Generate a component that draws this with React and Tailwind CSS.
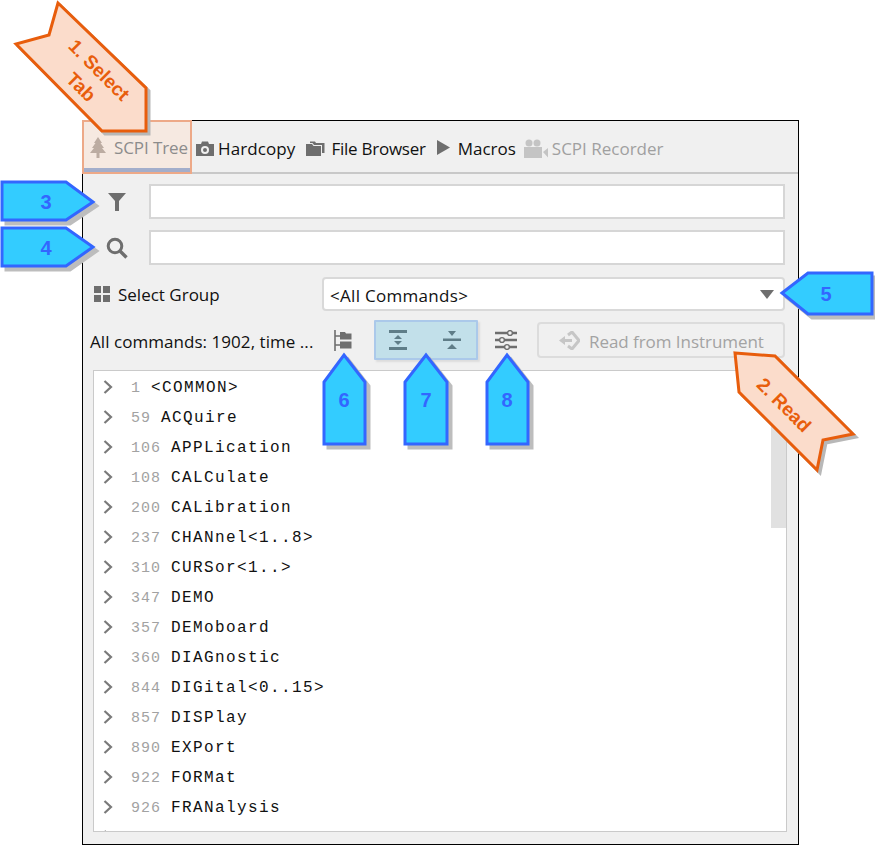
const rows = [
  ["1", "<COMMON>"], ["59", "ACQuire"], ["106", "APPLication"], ["108", "CALCulate"], ["200", "CALibration"],
  ["237", "CHANnel<1..8>"], ["310", "CURSor<1..>"], ["347", "DEMO"], ["357", "DEMoboard"], ["360", "DIAGnostic"],
  ["844", "DIGital<0..15>"], ["857", "DISPlay"], ["890", "EXPort"], ["922", "FORMat"], ["926", "FRANalysis"], ["", ""],
];

const Chevron = () => (
  <svg width="10" height="14" viewBox="0 0 10 14" className="-mt-[2px] shrink-0"><path d="M1.5 1 L8 7 L1.5 13" fill="none" stroke="#7a7a7a" strokeWidth="2.2" /></svg>
);

function Tabs() {
  return (
    <div className="flex h-[53px] items-stretch border-b-2 border-[#c8c8c8] text-[17px] text-[#111]">
      <div className="-mb-[2px] -ml-px -mt-px flex w-[110px] items-center border-2 border-[#eda988] bg-[#f6e9e1] pl-[6px] pt-[2px] text-[#8c8c8c] shadow-[inset_0_-4px_0_#a3aecb]">
        <svg width="16" height="22" viewBox="0 0 16 22"><path d="M8 0 L12 6 H10.5 L14 11 H12 L16 16 H9.5 V21 H6.5 V16 H0 L4 11 H2 L5.5 6 H4 Z" fill="#bcaca2" /></svg>
        <span className="ml-[8px] whitespace-nowrap tracking-[-0.1px]">SCPI Tree</span>
      </div>
      <div className="flex items-center pl-[4px] pt-[4px]">
        <svg width="18" height="16" viewBox="0 0 18 16"><path fillRule="evenodd" d="M0 3 H5 L6 0.5 H12 L13 3 H18 V15 H0 Z M9 5 A4 4 0 1 0 9 13 A4 4 0 1 0 9 5 Z M9 7 A2 2 0 1 1 9 11 A2 2 0 1 1 9 7 Z" fill="#6e6e6e" /></svg>
        <span className="ml-[4px] tracking-[0.1px]">Hardcopy</span>
      </div>
      <div className="flex items-center pl-[11px] pt-[4px]">
        <svg width="19" height="16" viewBox="0 0 19 16"><path d="M0 3 H6 L7.5 5 H15 V15 H0 Z" fill="#6e6e6e" /><path d="M4 0.5 H9 L10 2 H18.5 V12 H16 V4 H8 L6.5 2 H4 Z" fill="#6e6e6e" /></svg>
        <span className="ml-[6px] tracking-[-0.25px]">File Browser</span>
      </div>
      <div className="flex items-center pl-[11px] pt-[4px]">
        <svg width="13" height="15" viewBox="0 0 13 15" className="-mt-[2px]"><path d="M0 0 L13 7.5 L0 15 Z" fill="#6e6e6e" /></svg>
        <span className="ml-[8px]">Macros</span>
      </div>
      <div className="flex items-center pl-[8px] pt-[4px] text-[#a0a0a0]">
        <svg width="24" height="20" viewBox="0 0 24 20"><circle cx="5" cy="4" r="3.5" fill="#c4c4c4" /><circle cx="13" cy="4" r="3.5" fill="#c4c4c4" /><path d="M0 8 H18 V19 H0 Z M19 13 L24 9 V18.5 Z" fill="#c4c4c4" /></svg>
        <span className="ml-[4px]">SCPI Recorder</span>
      </div>
    </div>
  );
}

function Top() {
  return (
    <div className="pr-[13px]">
      <div className="mt-[10px] flex h-[35px] items-center">
        <div className="flex w-[66px] justify-start pl-[25px]">
          <svg width="18" height="18" viewBox="0 0 18 18"><path d="M0 0 H18 L11 8 V18 H7 V8 Z" fill="#6e6e6e" /></svg>
        </div>
        <div className="h-full flex-1 border-2 border-[#d6d6d6] bg-white" />
      </div>
      <div className="mt-[11px] flex h-[35px] items-center">
        <div className="flex w-[66px] pl-[23px]">
          <svg width="22" height="22" viewBox="0 0 22 22"><circle cx="9" cy="9" r="6.8" fill="none" stroke="#6e6e6e" strokeWidth="3" /><path d="M13.5 13.5 L20.5 20.5" stroke="#6e6e6e" strokeWidth="3.4" /></svg>
        </div>
        <div className="h-full flex-1 border-2 border-[#d6d6d6] bg-white" />
      </div>
      <div className="mt-[12px] flex h-[34px] items-center">
        <div className="flex w-[239px] items-center pl-[11px] text-[17px] text-[#111]">
          <svg width="16" height="16" viewBox="0 0 16 16"><path d="M0 0 H7 V7 H0 Z M9 0 H16 V7 H9 Z M0 9 H7 V16 H0 Z M9 9 H16 V16 H9 Z" fill="#6e6e6e" /></svg>
          <span className="ml-[8px] pt-[2px]">Select Group</span>
        </div>
        <div className="flex h-full flex-1 items-center justify-between rounded-[4px] border-2 border-[#d9d9d9] bg-white pl-[6px] pr-[9px] text-[17px] text-[#111]">
          <span className="pt-[4px] tracking-[0.3px]">{"<All Commands>"}</span>
          <svg width="14" height="9" viewBox="0 0 14 9"><path d="M0 0 H14 L7 9 Z" fill="#6e6e6e" /></svg>
        </div>
      </div>
      <div className="mt-[11px] flex h-[36px] items-center">
        <span className="ml-[7px] w-[244px] whitespace-nowrap pt-[4px] text-[17px] tracking-[0.05px] text-[#111]">All commands: 1902, time ...</span>
        <svg width="18" height="21" viewBox="0 0 18 21" className="shrink-0"><path d="M1 0 V21 M1 6 H6 M1 15 H6" stroke="#6e6e6e" strokeWidth="1.6" fill="none" /><path d="M6 2 H11 L12 3.5 H17.5 V9.5 H6 Z M6 11.5 H17.5 V18.5 H6 Z" fill="#6e6e6e" /></svg>
        <div className="ml-[22px] flex h-[40px] w-[104px] shrink-0 items-center rounded-[1px] border-2 border-[#abc9ea] bg-[#c2e0ea] shadow-[2px_2px_2px_#dcdcdc]">
          <svg width="18" height="20" viewBox="0 0 18 20" className="ml-[13px]"><path d="M0 0 H18 V3 H0 Z M0 17 H18 V20 H0 Z M9 5 L13 9 H5 Z M9 15 L13 11 H5 Z" fill="#5f7d88" /></svg>
          <svg width="18" height="20" viewBox="0 0 18 20" className="ml-[36px]"><path d="M0 8.5 H18 V11 H0 Z M5 1 H13 L9 6 Z M9 14 L14 19 H4 Z" fill="#5f7d88" /></svg>
        </div>
        <svg width="22" height="20" viewBox="0 0 22 20" className="ml-[17px] shrink-0">
          <path d="M0 3 H22 M0 10 H22 M0 17 H22" stroke="#6e6e6e" strokeWidth="2.4" />
          <circle cx="15" cy="3" r="2.4" fill="#f0f0f0" stroke="#6e6e6e" strokeWidth="1.4" /><circle cx="7" cy="10" r="2.4" fill="#f0f0f0" stroke="#6e6e6e" strokeWidth="1.4" /><circle cx="12" cy="17" r="2.4" fill="#f0f0f0" stroke="#6e6e6e" strokeWidth="1.4" />
        </svg>
        <div className="ml-[20px] flex h-full flex-1 items-center rounded-[4px] border-2 border-[#dcdcdc] pl-[20px] text-[17px] text-[#a3a3a3]">
          <svg width="21" height="19" viewBox="0 0 21 19"><path d="M9 4 L13 1 L20 9.5 L13 18 L9 15" fill="none" stroke="#c6c6c6" strokeWidth="3" /><path d="M0 9.5 L6 5 V8 H13 V11 H6 V14 Z" fill="#c6c6c6" /></svg>
          <span className="ml-[9px] whitespace-nowrap pt-[4px] tracking-[-0.05px]">Read from Instrument</span>
        </div>
      </div>
    </div>
  );
}

function List() {
  return (
    <div className="mb-[12px] ml-[10px] mr-[11px] mt-[12px] flex min-h-0 flex-1 overflow-hidden border border-[#cacaca] bg-white pt-[2px]">
      <div className="min-w-0 flex-1">
        {rows.map(([n, label], i) => (
          <div key={i} className="flex h-[30px] items-center pl-[9px] [font-family:'Liberation_Mono',monospace]">
            <Chevron />
            <span className="ml-[18px] text-[15px] leading-none tracking-[1px] text-[#a2a2a2]">{n}</span>
            <span className="ml-[10px] text-[16px] leading-none tracking-[1.4px] text-[#111]">{label}</span>
          </div>
        ))}
      </div>
      <div className="w-[15px] shrink-0"><div className="h-[155px] bg-[#e1e1e1]" /></div>
    </div>
  );
}

const blue = (pts, n, x, y, k) => (
  <g key={k}>
    <polygon points={pts} fill="#bdbdbd" stroke="#bdbdbd" strokeWidth="3" transform="translate(4 4)" />
    <polygon points={pts} fill="#33ccff" stroke="#3366ff" strokeWidth="3" />
    <text x={x} y={y} textAnchor="middle" dominantBaseline="central" fontFamily="'Liberation Sans',sans-serif" fontWeight="700" fontSize="20" fill="#3366ff">{n}</text>
  </g>
);

function Callouts() {
  const p1 = "58,3 49,35 16,44 102,131 146,131 146,88";
  const p2 = "735,353 775,356 853,434 823,440 817,470 739,392";
  return (
    <svg width="875" height="845" viewBox="0 0 875 845" className="pointer-events-none absolute left-0 top-0">
      <polygon points={p1} fill="#b8b8b8" stroke="#b8b8b8" strokeWidth="3" transform="translate(3 3)" />
      <polygon points={p1} fill="#fbdccb" stroke="#e85d0c" strokeWidth="3" />
      <g fontFamily="'Liberation Sans',sans-serif" fontWeight="700" fontSize="19" fill="#e85d0c">
        <text x="99" y="70" textAnchor="middle" dominantBaseline="central" transform="rotate(45 99 70)">1. Select</text>
        <text x="81" y="87" textAnchor="middle" dominantBaseline="central" transform="rotate(45 81 87)">Tab</text>
      </g>
      <polygon points={p2} fill="#b8b8b8" stroke="#b8b8b8" strokeWidth="3" transform="translate(3 3)" />
      <polygon points={p2} fill="#fbdccb" stroke="#e85d0c" strokeWidth="3" />
      <text x="784" y="405" textAnchor="middle" dominantBaseline="central" transform="rotate(45 784 405)" fontFamily="'Liberation Sans',sans-serif" fontWeight="700" fontSize="19" fill="#e85d0c">2. Read</text>
      {blue("2,182 66,182 93,202 66,220 2,220", "3", 46, 202, 3)}
      {blue("2,228 66,228 93,247 66,266 2,266", "4", 46, 248, 4)}
      {blue("782,293 808,273 872,273 872,314 808,314", "5", 826, 294, 5)}
      {blue("344,355 365,382 365,444 324,444 324,382", "6", 344, 400, 6)}
      {blue("426,355 447,382 447,444 405,444 405,382", "7", 426, 400, 7)}
      {blue("507,355 528,382 528,444 487,444 487,382", "8", 507, 400, 8)}
    </svg>
  );
}

export default function App() {
  return (
    <div className="relative h-[845px] w-[875px] overflow-hidden bg-white pl-[82px] pt-[120px] [font-family:'Open_Sans',sans-serif]">
      <div className="flex h-[725px] w-[717px] flex-col border border-black bg-[#f0f0f0]">
        <Tabs />
        <Top />
        <List />
      </div>
      <Callouts />
    </div>
  );
}
